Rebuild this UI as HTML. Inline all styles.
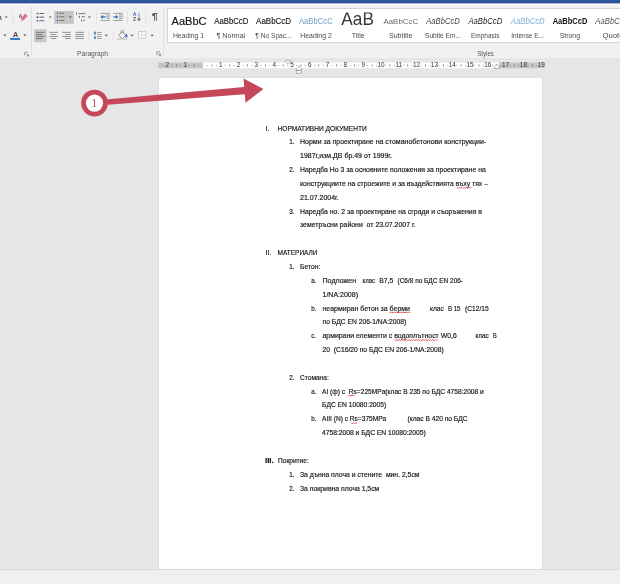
<!DOCTYPE html>
<html lang="bg"><head><meta charset="utf-8"><title>Document</title>
<style>
html,body{margin:0;padding:0;}
body{width:620px;height:584px;overflow:hidden;background:#e6e6e6;font-family:"Liberation Sans",sans-serif;position:relative;}
#titlebar{position:absolute;left:0;top:0;width:620px;height:4px;background:#2b579a;}
#ribbon{position:absolute;left:0;top:4px;width:620px;height:54px;background:#f1f1f1;}
#gallery{position:absolute;left:167px;top:8px;width:460px;height:35px;background:#fff;border:1px solid #d4d4d4;box-sizing:border-box;}
#workspace{position:absolute;left:0;top:58px;width:620px;height:511px;background:#e6e6e6;}
#page{position:absolute;left:159px;top:78px;width:383px;height:491px;background:#fff;box-shadow:0 0 0 1px #dedede;}
#statusbar{position:absolute;left:0;top:569px;width:620px;height:15px;background:#f0f0f0;border-top:1px solid #dadada;box-sizing:border-box;}
#ov{position:absolute;left:0;top:0;will-change:transform;}
text{font-family:"Liberation Sans",sans-serif;}
</style></head><body>
<div id="titlebar"></div>
<div id="ribbon"></div>
<div id="gallery"></div>
<div id="workspace"></div>
<div id="page"></div>
<div id="statusbar"></div>
<svg id="ov" width="620" height="584" viewBox="0 0 620 584">

<g id="doctext">
<text x="265.50" y="130.50" font-size="7.6" fill="#151515" textLength="3.80" lengthAdjust="spacingAndGlyphs" xml:space="preserve" stroke="#151515" stroke-width="0.18">I.</text>
<text x="277.50" y="130.50" font-size="7.6" fill="#151515" textLength="89.25" lengthAdjust="spacingAndGlyphs" xml:space="preserve" stroke="#151515" stroke-width="0.18">НОРМАТИВНИ ДОКУМЕНТИ</text>
<text x="289.25" y="144.35" font-size="7.6" fill="#151515" textLength="5.25" lengthAdjust="spacingAndGlyphs" xml:space="preserve" stroke="#151515" stroke-width="0.18">1.</text>
<text x="300.00" y="144.35" font-size="7.6" fill="#151515" textLength="186.25" lengthAdjust="spacingAndGlyphs" xml:space="preserve" stroke="#151515" stroke-width="0.18">Норми за проектиране на стоманобетонови конструкции-</text>
<text x="300.00" y="158.19" font-size="7.6" fill="#151515" textLength="92.00" lengthAdjust="spacingAndGlyphs" xml:space="preserve" stroke="#151515" stroke-width="0.18">1987г,изм.ДВ бр.49 от 1999г.</text>
<text x="289.25" y="172.04" font-size="7.6" fill="#151515" textLength="5.25" lengthAdjust="spacingAndGlyphs" xml:space="preserve" stroke="#151515" stroke-width="0.18">2.</text>
<text x="300.00" y="172.04" font-size="7.6" fill="#151515" textLength="185.75" lengthAdjust="spacingAndGlyphs" xml:space="preserve" stroke="#151515" stroke-width="0.18">Наредба Но 3 за основните положения за проектиране на</text>
<text x="300.00" y="185.88" font-size="7.6" fill="#151515" textLength="188.00" lengthAdjust="spacingAndGlyphs" xml:space="preserve" stroke="#151515" stroke-width="0.18">конструкциите на строежите и за въздействията въху тях –</text>
<text x="300.00" y="199.73" font-size="7.6" fill="#151515" textLength="38.75" lengthAdjust="spacingAndGlyphs" xml:space="preserve" stroke="#151515" stroke-width="0.18">21.07.2004г.</text>
<text x="289.25" y="213.58" font-size="7.6" fill="#151515" textLength="5.25" lengthAdjust="spacingAndGlyphs" xml:space="preserve" stroke="#151515" stroke-width="0.18">3.</text>
<text x="300.00" y="213.58" font-size="7.6" fill="#151515" textLength="182.00" lengthAdjust="spacingAndGlyphs" xml:space="preserve" stroke="#151515" stroke-width="0.18">Наредба но. 2 за проектиране на сгради и съоръжения в</text>
<text x="300.00" y="227.42" font-size="7.6" fill="#151515" textLength="115.50" lengthAdjust="spacingAndGlyphs" xml:space="preserve" stroke="#151515" stroke-width="0.18">земетръсни райони  от 23.07.2007 г.</text>
<text x="265.50" y="255.11" font-size="7.6" fill="#151515" textLength="6.00" lengthAdjust="spacingAndGlyphs" xml:space="preserve" stroke="#151515" stroke-width="0.18">II.</text>
<text x="277.50" y="255.11" font-size="7.6" fill="#151515" textLength="40.00" lengthAdjust="spacingAndGlyphs" xml:space="preserve" stroke="#151515" stroke-width="0.18">МАТЕРИАЛИ</text>
<text x="289.25" y="268.96" font-size="7.6" fill="#151515" textLength="5.25" lengthAdjust="spacingAndGlyphs" xml:space="preserve" stroke="#151515" stroke-width="0.18">1.</text>
<text x="300.00" y="268.96" font-size="7.6" fill="#151515" textLength="20.50" lengthAdjust="spacingAndGlyphs" xml:space="preserve" stroke="#151515" stroke-width="0.18">Бетон:</text>
<text x="311.25" y="282.81" font-size="7.6" fill="#151515" textLength="5.05" lengthAdjust="spacingAndGlyphs" xml:space="preserve" stroke="#151515" stroke-width="0.18">a.</text>
<text x="322.50" y="282.81" font-size="7.6" fill="#151515" textLength="33.75" lengthAdjust="spacingAndGlyphs" xml:space="preserve" stroke="#151515" stroke-width="0.18">Подложен</text>
<text x="362.50" y="282.81" font-size="7.6" fill="#151515" textLength="12.50" lengthAdjust="spacingAndGlyphs" xml:space="preserve" stroke="#151515" stroke-width="0.18">клас</text>
<text x="379.25" y="282.81" font-size="7.6" fill="#151515" textLength="14.00" lengthAdjust="spacingAndGlyphs" xml:space="preserve" stroke="#151515" stroke-width="0.18">В7,5</text>
<text x="397.50" y="282.81" font-size="7.6" fill="#151515" textLength="65.50" lengthAdjust="spacingAndGlyphs" xml:space="preserve" stroke="#151515" stroke-width="0.18">(С6/8 по БДС EN 206-</text>
<text x="322.50" y="296.65" font-size="7.6" fill="#151515" textLength="35.50" lengthAdjust="spacingAndGlyphs" xml:space="preserve" stroke="#151515" stroke-width="0.18">1/NA:2008)</text>
<text x="311.25" y="310.50" font-size="7.6" fill="#151515" textLength="5.25" lengthAdjust="spacingAndGlyphs" xml:space="preserve" stroke="#151515" stroke-width="0.18">b.</text>
<text x="322.50" y="310.50" font-size="7.6" fill="#151515" textLength="87.50" lengthAdjust="spacingAndGlyphs" xml:space="preserve" stroke="#151515" stroke-width="0.18">неармиран бетон за берми</text>
<text x="430.00" y="310.50" font-size="7.6" fill="#151515" textLength="13.75" lengthAdjust="spacingAndGlyphs" xml:space="preserve" stroke="#151515" stroke-width="0.18">клас</text>
<text x="448.00" y="310.50" font-size="7.6" fill="#151515" textLength="12.50" lengthAdjust="spacingAndGlyphs" xml:space="preserve" stroke="#151515" stroke-width="0.18">В 15</text>
<text x="465.00" y="310.50" font-size="7.6" fill="#151515" textLength="23.75" lengthAdjust="spacingAndGlyphs" xml:space="preserve" stroke="#151515" stroke-width="0.18">(С12/15</text>
<text x="322.50" y="324.34" font-size="7.6" fill="#151515" textLength="83.75" lengthAdjust="spacingAndGlyphs" xml:space="preserve" stroke="#151515" stroke-width="0.18">по БДС EN 206-1/NA:2008)</text>
<text x="311.25" y="338.19" font-size="7.6" fill="#151515" textLength="4.75" lengthAdjust="spacingAndGlyphs" xml:space="preserve" stroke="#151515" stroke-width="0.18">c.</text>
<text x="322.50" y="338.19" font-size="7.6" fill="#151515" textLength="134.25" lengthAdjust="spacingAndGlyphs" xml:space="preserve" stroke="#151515" stroke-width="0.18">армирани елементи с водоплътност W0,6</text>
<text x="475.50" y="338.19" font-size="7.6" fill="#151515" textLength="13.25" lengthAdjust="spacingAndGlyphs" xml:space="preserve" stroke="#151515" stroke-width="0.18">клас</text>
<text x="493.00" y="338.19" font-size="7.6" fill="#151515" textLength="3.75" lengthAdjust="spacingAndGlyphs" xml:space="preserve" stroke="#151515" stroke-width="0.18">В</text>
<text x="322.50" y="352.04" font-size="7.6" fill="#151515" textLength="121.25" lengthAdjust="spacingAndGlyphs" xml:space="preserve" stroke="#151515" stroke-width="0.18">20  (С16/20 по БДС EN 206-1/NA:2008)</text>
<text x="289.25" y="379.73" font-size="7.6" fill="#151515" textLength="5.25" lengthAdjust="spacingAndGlyphs" xml:space="preserve" stroke="#151515" stroke-width="0.18">2.</text>
<text x="300.00" y="379.73" font-size="7.6" fill="#151515" textLength="28.75" lengthAdjust="spacingAndGlyphs" xml:space="preserve" stroke="#151515" stroke-width="0.18">Стомана:</text>
<text x="311.25" y="393.57" font-size="7.6" fill="#151515" textLength="5.05" lengthAdjust="spacingAndGlyphs" xml:space="preserve" stroke="#151515" stroke-width="0.18">a.</text>
<text x="322.00" y="393.57" font-size="7.6" fill="#151515" textLength="161.75" lengthAdjust="spacingAndGlyphs" xml:space="preserve" stroke="#151515" stroke-width="0.18">AI (ф) с  Rs=225MPa(клас В 235 по БДС 4758:2008 и</text>
<text x="322.00" y="407.42" font-size="7.6" fill="#151515" textLength="64.25" lengthAdjust="spacingAndGlyphs" xml:space="preserve" stroke="#151515" stroke-width="0.18">БДС EN 10080:2005)</text>
<text x="311.25" y="421.27" font-size="7.6" fill="#151515" textLength="5.25" lengthAdjust="spacingAndGlyphs" xml:space="preserve" stroke="#151515" stroke-width="0.18">b.</text>
<text x="322.00" y="421.27" font-size="7.6" fill="#151515" textLength="64.25" lengthAdjust="spacingAndGlyphs" xml:space="preserve" stroke="#151515" stroke-width="0.18">AIII (N) с Rs=375MPa</text>
<text x="407.50" y="421.27" font-size="7.6" fill="#151515" textLength="60.00" lengthAdjust="spacingAndGlyphs" xml:space="preserve" stroke="#151515" stroke-width="0.18">(клас В 420 по БДС</text>
<text x="322.00" y="435.11" font-size="7.6" fill="#151515" textLength="103.75" lengthAdjust="spacingAndGlyphs" xml:space="preserve" stroke="#151515" stroke-width="0.18">4758:2008 и БДС EN 10080:2005)</text>
<text x="265.00" y="462.80" font-size="7.6" fill="#151515" textLength="8.75" lengthAdjust="spacingAndGlyphs" xml:space="preserve" font-weight="bold" stroke="#151515" stroke-width="0.18">III.</text>
<text x="278.00" y="462.80" font-size="7.6" fill="#151515" textLength="30.75" lengthAdjust="spacingAndGlyphs" xml:space="preserve" stroke="#151515" stroke-width="0.18">Покритие:</text>
<text x="289.25" y="476.65" font-size="7.6" fill="#151515" textLength="5.25" lengthAdjust="spacingAndGlyphs" xml:space="preserve" stroke="#151515" stroke-width="0.18">1.</text>
<text x="300.00" y="476.65" font-size="7.6" fill="#151515" textLength="119.50" lengthAdjust="spacingAndGlyphs" xml:space="preserve" stroke="#151515" stroke-width="0.18">За дънна плоча и стените  мин. 2,5см</text>
<text x="289.25" y="490.50" font-size="7.6" fill="#151515" textLength="5.25" lengthAdjust="spacingAndGlyphs" xml:space="preserve" stroke="#151515" stroke-width="0.18">2.</text>
<text x="300.00" y="490.50" font-size="7.6" fill="#151515" textLength="79.25" lengthAdjust="spacingAndGlyphs" xml:space="preserve" stroke="#151515" stroke-width="0.18">За покривна плоча 1,5см</text>
<polyline points="457.0,187.2 458.2,188.4 459.4,187.2 460.6,188.4 461.8,187.2 463.0,188.4 464.2,187.2 465.4,188.4 466.6,187.2 467.8,188.4 469.0,187.2 470.2,188.4 471.4,187.2" fill="none" stroke="#e02a2a" stroke-width="0.8"/>
<polyline points="389.5,311.8 390.7,313.0 391.9,311.8 393.1,313.0 394.3,311.8 395.5,313.0 396.7,311.8 397.9,313.0 399.1,311.8 400.3,313.0 401.5,311.8 402.7,313.0 403.9,311.8 405.1,313.0 406.3,311.8 407.5,313.0 408.7,311.8 409.9,313.0" fill="none" stroke="#e02a2a" stroke-width="0.8"/>
<polyline points="394.5,339.5 395.7,340.7 396.9,339.5 398.1,340.7 399.3,339.5 400.5,340.7 401.7,339.5 402.9,340.7 404.1,339.5 405.3,340.7 406.5,339.5 407.7,340.7 408.9,339.5 410.1,340.7 411.3,339.5 412.5,340.7 413.7,339.5 414.9,340.7 416.1,339.5 417.3,340.7 418.5,339.5 419.7,340.7 420.9,339.5 422.1,340.7 423.3,339.5 424.5,340.7 425.7,339.5 426.9,340.7 428.1,339.5 429.3,340.7 430.5,339.5 431.7,340.7 432.9,339.5 434.1,340.7 435.3,339.5 436.5,340.7 437.7,339.5" fill="none" stroke="#e02a2a" stroke-width="0.8"/>
<polyline points="348.5,394.9 349.7,396.1 350.9,394.9 352.1,396.1 353.3,394.9 354.5,396.1" fill="none" stroke="#e02a2a" stroke-width="0.8"/>
<polyline points="351.0,422.6 352.2,423.8 353.4,422.6 354.6,423.8 355.8,422.6 357.0,423.8" fill="none" stroke="#e02a2a" stroke-width="0.8"/>
</g>
<g id="ruler">
<rect x="158" y="62.5" width="45" height="5.7" fill="#c6c6c6"/>
<rect x="203" y="62.5" width="296" height="5.7" fill="#ffffff"/>
<rect x="499" y="62.5" width="45.5" height="5.7" fill="#c6c6c6"/>
<text x="167.4" y="67.4" font-size="6.4" fill="#333" text-anchor="middle">2</text>
<text x="185.2" y="67.4" font-size="6.4" fill="#333" text-anchor="middle">1</text>
<text x="220.8" y="67.4" font-size="6.4" fill="#333" text-anchor="middle">1</text>
<text x="238.6" y="67.4" font-size="6.4" fill="#333" text-anchor="middle">2</text>
<text x="256.4" y="67.4" font-size="6.4" fill="#333" text-anchor="middle">3</text>
<text x="274.2" y="67.4" font-size="6.4" fill="#333" text-anchor="middle">4</text>
<text x="292.0" y="67.4" font-size="6.4" fill="#333" text-anchor="middle">5</text>
<text x="309.8" y="67.4" font-size="6.4" fill="#333" text-anchor="middle">6</text>
<text x="327.6" y="67.4" font-size="6.4" fill="#333" text-anchor="middle">7</text>
<text x="345.4" y="67.4" font-size="6.4" fill="#333" text-anchor="middle">8</text>
<text x="363.2" y="67.4" font-size="6.4" fill="#333" text-anchor="middle">9</text>
<text x="381.0" y="67.4" font-size="6.4" fill="#333" text-anchor="middle">10</text>
<text x="398.8" y="67.4" font-size="6.4" fill="#333" text-anchor="middle">11</text>
<text x="416.6" y="67.4" font-size="6.4" fill="#333" text-anchor="middle">12</text>
<text x="434.4" y="67.4" font-size="6.4" fill="#333" text-anchor="middle">13</text>
<text x="452.2" y="67.4" font-size="6.4" fill="#333" text-anchor="middle">14</text>
<text x="470.0" y="67.4" font-size="6.4" fill="#333" text-anchor="middle">15</text>
<text x="487.8" y="67.4" font-size="6.4" fill="#333" text-anchor="middle">16</text>
<text x="505.6" y="67.4" font-size="6.4" fill="#333" text-anchor="middle">17</text>
<text x="523.4" y="67.4" font-size="6.4" fill="#333" text-anchor="middle">18</text>
<text x="541.2" y="67.4" font-size="6.4" fill="#333" text-anchor="middle">19</text>
<rect x="162.5" y="65" width="0.8" height="0.8" fill="#777"/>
<rect x="171.4" y="65" width="0.8" height="0.8" fill="#777"/>
<rect x="176.0" y="64.3" width="0.7" height="2.3" fill="#6a6a6a"/>
<rect x="180.3" y="65" width="0.8" height="0.8" fill="#777"/>
<rect x="189.2" y="65" width="0.8" height="0.8" fill="#777"/>
<rect x="193.8" y="64.3" width="0.7" height="2.3" fill="#6a6a6a"/>
<rect x="198.2" y="65" width="0.8" height="0.8" fill="#777"/>
<rect x="207.0" y="65" width="0.8" height="0.8" fill="#777"/>
<rect x="211.6" y="64.3" width="0.7" height="2.3" fill="#6a6a6a"/>
<rect x="215.9" y="65" width="0.8" height="0.8" fill="#777"/>
<rect x="224.8" y="65" width="0.8" height="0.8" fill="#777"/>
<rect x="229.4" y="64.3" width="0.7" height="2.3" fill="#6a6a6a"/>
<rect x="233.8" y="65" width="0.8" height="0.8" fill="#777"/>
<rect x="242.7" y="65" width="0.8" height="0.8" fill="#777"/>
<rect x="247.2" y="64.3" width="0.7" height="2.3" fill="#6a6a6a"/>
<rect x="251.5" y="65" width="0.8" height="0.8" fill="#777"/>
<rect x="260.5" y="65" width="0.8" height="0.8" fill="#777"/>
<rect x="265.0" y="64.3" width="0.7" height="2.3" fill="#6a6a6a"/>
<rect x="269.4" y="65" width="0.8" height="0.8" fill="#777"/>
<rect x="278.2" y="65" width="0.8" height="0.8" fill="#777"/>
<rect x="282.8" y="64.3" width="0.7" height="2.3" fill="#6a6a6a"/>
<rect x="287.2" y="65" width="0.8" height="0.8" fill="#777"/>
<rect x="296.1" y="65" width="0.8" height="0.8" fill="#777"/>
<rect x="300.6" y="64.3" width="0.7" height="2.3" fill="#6a6a6a"/>
<rect x="305.0" y="65" width="0.8" height="0.8" fill="#777"/>
<rect x="313.9" y="65" width="0.8" height="0.8" fill="#777"/>
<rect x="318.4" y="64.3" width="0.7" height="2.3" fill="#6a6a6a"/>
<rect x="322.8" y="65" width="0.8" height="0.8" fill="#777"/>
<rect x="331.7" y="65" width="0.8" height="0.8" fill="#777"/>
<rect x="336.2" y="64.3" width="0.7" height="2.3" fill="#6a6a6a"/>
<rect x="340.6" y="65" width="0.8" height="0.8" fill="#777"/>
<rect x="349.5" y="65" width="0.8" height="0.8" fill="#777"/>
<rect x="354.0" y="64.3" width="0.7" height="2.3" fill="#6a6a6a"/>
<rect x="358.4" y="65" width="0.8" height="0.8" fill="#777"/>
<rect x="367.2" y="65" width="0.8" height="0.8" fill="#777"/>
<rect x="371.8" y="64.3" width="0.7" height="2.3" fill="#6a6a6a"/>
<rect x="376.2" y="65" width="0.8" height="0.8" fill="#777"/>
<rect x="385.1" y="65" width="0.8" height="0.8" fill="#777"/>
<rect x="389.6" y="64.3" width="0.7" height="2.3" fill="#6a6a6a"/>
<rect x="394.0" y="65" width="0.8" height="0.8" fill="#777"/>
<rect x="402.9" y="65" width="0.8" height="0.8" fill="#777"/>
<rect x="407.4" y="64.3" width="0.7" height="2.3" fill="#6a6a6a"/>
<rect x="411.8" y="65" width="0.8" height="0.8" fill="#777"/>
<rect x="420.7" y="65" width="0.8" height="0.8" fill="#777"/>
<rect x="425.2" y="64.3" width="0.7" height="2.3" fill="#6a6a6a"/>
<rect x="429.6" y="65" width="0.8" height="0.8" fill="#777"/>
<rect x="438.5" y="65" width="0.8" height="0.8" fill="#777"/>
<rect x="443.0" y="64.3" width="0.7" height="2.3" fill="#6a6a6a"/>
<rect x="447.4" y="65" width="0.8" height="0.8" fill="#777"/>
<rect x="456.2" y="65" width="0.8" height="0.8" fill="#777"/>
<rect x="460.8" y="64.3" width="0.7" height="2.3" fill="#6a6a6a"/>
<rect x="465.2" y="65" width="0.8" height="0.8" fill="#777"/>
<rect x="474.1" y="65" width="0.8" height="0.8" fill="#777"/>
<rect x="478.6" y="64.3" width="0.7" height="2.3" fill="#6a6a6a"/>
<rect x="483.0" y="65" width="0.8" height="0.8" fill="#777"/>
<rect x="491.9" y="65" width="0.8" height="0.8" fill="#777"/>
<rect x="496.4" y="64.3" width="0.7" height="2.3" fill="#6a6a6a"/>
<rect x="500.8" y="65" width="0.8" height="0.8" fill="#777"/>
<rect x="509.7" y="65" width="0.8" height="0.8" fill="#777"/>
<rect x="514.2" y="64.3" width="0.7" height="2.3" fill="#6a6a6a"/>
<rect x="518.6" y="65" width="0.8" height="0.8" fill="#777"/>
<rect x="527.5" y="65" width="0.8" height="0.8" fill="#777"/>
<rect x="532.0" y="64.3" width="0.7" height="2.3" fill="#6a6a6a"/>
<rect x="536.4" y="65" width="0.8" height="0.8" fill="#777"/>
<path d="M285.5 60.4 h5 v1.1 l-2.5 2.7 l-2.5 -2.7 z" fill="#fafafa" stroke="#888" stroke-width="0.6"/>
<path d="M296.2 70.2 v-1.6 l2.7 -2.8 l2.7 2.8 v1.6 z" fill="#fafafa" stroke="#888" stroke-width="0.6"/>
<rect x="296.2" y="70.6" width="5.4" height="2.6" fill="#fafafa" stroke="#888" stroke-width="0.6"/>
<path d="M494.2 68.6 v-1.4 l2.7 -2.8 l2.7 2.8 v1.4 z" fill="#fafafa" stroke="#888" stroke-width="0.6"/>
</g>
<g id="callout">
<polygon points="94.7,105.8 244.8,94.3 245.5,102.7 263.4,89.0 243.5,78.4 244.2,86.9 94.3,100.4" fill="#c5485a"/>
<circle cx="94.5" cy="103.1" r="13.4" fill="#c5485a"/>
<circle cx="94.5" cy="103.1" r="8.6" fill="#ffffff"/>
<text x="94.3" y="107" font-size="11.5" fill="#c5485a" text-anchor="middle" style="font-family:'Liberation Serif',serif">1</text>
</g>
<g id="gallerytext">
<text x="171.60" y="24.50" font-size="11.5" fill="#111" textLength="34.90" lengthAdjust="spacingAndGlyphs" xml:space="preserve" stroke="#111" stroke-width="0.15">AaBbC</text>
<text x="172.90" y="38.00" font-size="7.6" fill="#4a4a4a" textLength="31.20" lengthAdjust="spacingAndGlyphs" xml:space="preserve">Heading 1</text>
<text x="214.20" y="23.70" font-size="8.2" fill="#111" textLength="34.20" lengthAdjust="spacingAndGlyphs" xml:space="preserve" stroke="#111" stroke-width="0.1">AaBbCcD</text>
<text x="216.60" y="37.90" font-size="7.6" fill="#4a4a4a" textLength="28.60" lengthAdjust="spacingAndGlyphs" xml:space="preserve">¶ Normal</text>
<text x="256.10" y="23.70" font-size="8.2" fill="#111" textLength="35.00" lengthAdjust="spacingAndGlyphs" xml:space="preserve" stroke="#111" stroke-width="0.1">AaBbCcD</text>
<text x="255.30" y="37.90" font-size="7.6" fill="#4a4a4a" textLength="36.30" lengthAdjust="spacingAndGlyphs" xml:space="preserve">¶ No Spac...</text>
<text x="298.90" y="23.70" font-size="8.6" fill="#6d9cc8" textLength="33.80" lengthAdjust="spacingAndGlyphs" xml:space="preserve">AaBbCcC</text>
<text x="300.20" y="37.90" font-size="7.6" fill="#4a4a4a" textLength="31.70" lengthAdjust="spacingAndGlyphs" xml:space="preserve">Heading 2</text>
<clipPath id="ttl"><rect x="335" y="12.6" width="45" height="20"/></clipPath>
<g clip-path="url(#ttl)">
<text x="341.30" y="25.00" font-size="19" fill="#383838" textLength="32.60" lengthAdjust="spacingAndGlyphs" xml:space="preserve">AaB</text>
</g>
<text x="351.80" y="37.90" font-size="7.6" fill="#4a4a4a" textLength="12.90" lengthAdjust="spacingAndGlyphs" xml:space="preserve">Title</text>
<text x="383.4" y="23.7" font-size="7.8" fill="#666" textLength="34.8" lengthAdjust="spacing">AaBbCcC</text>
<text x="389.00" y="37.90" font-size="7.6" fill="#4a4a4a" textLength="23.40" lengthAdjust="spacingAndGlyphs" xml:space="preserve">Subtitle</text>
<text x="426.30" y="23.70" font-size="8.2" fill="#444" textLength="33.40" lengthAdjust="spacingAndGlyphs" xml:space="preserve" font-style="italic">AaBbCcD</text>
<text x="425.00" y="37.90" font-size="7.6" fill="#4a4a4a" textLength="36.00" lengthAdjust="spacingAndGlyphs" xml:space="preserve">Subtle Em...</text>
<text x="468.40" y="23.70" font-size="8.2" fill="#1a1a1a" textLength="33.90" lengthAdjust="spacingAndGlyphs" xml:space="preserve" font-style="italic">AaBbCcD</text>
<text x="471.00" y="37.90" font-size="7.6" fill="#4a4a4a" textLength="28.50" lengthAdjust="spacingAndGlyphs" xml:space="preserve">Emphasis</text>
<text x="510.80" y="23.70" font-size="8.2" fill="#7fb0d6" textLength="33.90" lengthAdjust="spacingAndGlyphs" xml:space="preserve" font-style="italic">AaBbCcD</text>
<text x="511.30" y="37.90" font-size="7.6" fill="#4a4a4a" textLength="32.60" lengthAdjust="spacingAndGlyphs" xml:space="preserve">Intense E...</text>
<text x="552.70" y="23.70" font-size="8.2" fill="#111" textLength="34.70" lengthAdjust="spacingAndGlyphs" xml:space="preserve" font-weight="bold">AaBbCcD</text>
<text x="559.80" y="37.90" font-size="7.6" fill="#4a4a4a" textLength="20.20" lengthAdjust="spacingAndGlyphs" xml:space="preserve">Strong</text>
<text x="595.30" y="23.70" font-size="8.2" fill="#555" textLength="34.00" lengthAdjust="spacingAndGlyphs" xml:space="preserve" font-style="italic">AaBbCcD</text>
<text x="602.60" y="37.90" font-size="7.6" fill="#4a4a4a" textLength="20.90" lengthAdjust="spacingAndGlyphs" xml:space="preserve">Quote</text>
<text x="77.10" y="55.70" font-size="7.6" fill="#555" textLength="30.90" lengthAdjust="spacingAndGlyphs" xml:space="preserve">Paragraph</text>
<text x="477.30" y="55.60" font-size="7.6" fill="#555" textLength="16.60" lengthAdjust="spacingAndGlyphs" xml:space="preserve">Styles</text>
</g>
<g id="icons">
<rect x="0" y="3.4" width="620" height="2.2" fill="#f9f9f9"/>
<rect x="31.1" y="6" width="0.9" height="50" fill="#dedede"/>
<rect x="163.0" y="6" width="0.9" height="50" fill="#dedede"/>
<rect x="12.5" y="12" width="0.9" height="12" fill="#e0e0e0"/>
<rect x="96.1" y="12" width="0.9" height="12" fill="#e0e0e0"/>
<rect x="127.0" y="12" width="0.9" height="12" fill="#e0e0e0"/>
<rect x="145.4" y="12" width="0.9" height="12" fill="#e0e0e0"/>
<rect x="88.3" y="30" width="0.9" height="12" fill="#e0e0e0"/>
<rect x="112.8" y="30" width="0.9" height="12" fill="#e0e0e0"/>
<text x="-2.6" y="19.6" font-size="8" fill="#444">a</text>
<path d="M4.7 16.4 h3 l-1.5 1.7 z" fill="#4a4a4a"/>
<text x="18.7" y="17.6" font-size="6.2" fill="#4a4a4a" font-weight="bold" textLength="3.4" lengthAdjust="spacingAndGlyphs">A</text>
<g transform="rotate(-47 23.7 17.8)"><rect x="19.5" y="16.1" width="8.4" height="3.4" rx="0.6" fill="#e6708f"/><rect x="19.5" y="16.1" width="1.6" height="3.4" rx="0.5" fill="#f6d6de"/></g>
<path d="M3.4 34.6 h3 l-1.5 1.7 z" fill="#4a4a4a"/>
<text x="12.9" y="37.4" font-size="7.6" fill="#454545" font-weight="bold" textLength="5.2" lengthAdjust="spacingAndGlyphs">A</text>
<rect x="10.2" y="37.9" width="9.9" height="2.1" fill="#3b78c3"/>
<path d="M23.4 34.6 h3 l-1.5 1.7 z" fill="#4a4a4a"/>
<path d="M24.6 55.400000000000006 V52.2 H27.8" fill="none" stroke="#777" stroke-width="0.7"/>
<path d="M26.200000000000003 53.800000000000004 L28.200000000000003 55.800000000000004 M28.400000000000002 54.0 V56.0 H26.400000000000002" fill="none" stroke="#777" stroke-width="0.7"/>
<path d="M156.8 55.0 V51.8 H160.0" fill="none" stroke="#777" stroke-width="0.7"/>
<path d="M158.4 53.4 L160.4 55.4 M160.60000000000002 53.599999999999994 V55.599999999999994 H158.60000000000002" fill="none" stroke="#777" stroke-width="0.7"/>
<rect x="36.7" y="12.7" width="1.6" height="1.6" rx="0.5" fill="#2f5597"/>
<rect x="39.4" y="13.05" width="4.8" height="0.9" fill="#5a5a5a"/>
<rect x="36.7" y="16.3" width="1.6" height="1.6" rx="0.5" fill="#2f5597"/>
<rect x="39.4" y="16.65" width="4.8" height="0.9" fill="#5a5a5a"/>
<rect x="36.7" y="19.9" width="1.6" height="1.6" rx="0.5" fill="#2f5597"/>
<rect x="39.4" y="20.25" width="4.8" height="0.9" fill="#5a5a5a"/>
<path d="M48.8 16.4 h3 l-1.5 1.7 z" fill="#4a4a4a"/>
<rect x="54.2" y="11" width="19.6" height="12.9" fill="#c6c6c6"/>
<rect x="56.9" y="12.1" width="0.9" height="2.2" fill="#3a6db5"/>
<rect x="59.2" y="12.75" width="5.2" height="0.9" fill="#6b6b5c"/>
<rect x="56.9" y="15.700000000000001" width="0.9" height="2.2" fill="#3a6db5"/>
<rect x="59.2" y="16.35" width="5.2" height="0.9" fill="#6b6b5c"/>
<rect x="56.9" y="19.299999999999997" width="0.9" height="2.2" fill="#3a6db5"/>
<rect x="59.2" y="19.95" width="5.2" height="0.9" fill="#6b6b5c"/>
<path d="M68.8 16.4 h3 l-1.5 1.7 z" fill="#4a4a4a"/>
<rect x="76" y="12.4" width="0.9" height="2.2" fill="#3a6db5"/>
<rect x="78.5" y="13.15" width="6.8" height="0.9" fill="#6e6e6e"/>
<rect x="78.8" y="15.7" width="1.1" height="2" fill="#3a6db5"/>
<rect x="81.4" y="16.35" width="3.5" height="0.9" fill="#6e6e6e"/>
<rect x="81" y="19.3" width="0.8" height="2.2" fill="#3a6db5"/>
<rect x="83.0" y="19.95" width="1.9" height="0.9" fill="#6e6e6e"/>
<path d="M87.9 16.4 h3 l-1.5 1.7 z" fill="#4a4a4a"/>
<rect x="100.4" y="12.90" width="9.5" height="0.8" fill="#8c8c8c"/>
<rect x="100.4" y="20.10" width="9.5" height="0.8" fill="#8c8c8c"/>
<rect x="106.3" y="14.60" width="3.6" height="0.8" fill="#8c8c8c"/>
<rect x="106.3" y="16.40" width="3.6" height="0.8" fill="#8c8c8c"/>
<rect x="106.3" y="18.10" width="3.6" height="0.8" fill="#8c8c8c"/>
<path d="M100.4 16.9 l2.3 -2.1 v1.4 h2.9 v1.4 h-2.9 v1.4 z" fill="#3a6db5"/>
<rect x="113.3" y="12.90" width="9.5" height="0.8" fill="#8c8c8c"/>
<rect x="113.3" y="20.10" width="9.5" height="0.8" fill="#8c8c8c"/>
<rect x="118.9" y="14.60" width="3.9" height="0.8" fill="#8c8c8c"/>
<rect x="118.9" y="16.40" width="3.9" height="0.8" fill="#8c8c8c"/>
<rect x="118.9" y="18.10" width="3.9" height="0.8" fill="#8c8c8c"/>
<path d="M118.3 16.9 l-2.3 -2.1 v1.4 h-2.6 v1.4 h2.6 v1.4 z" fill="#3a6db5"/>
<text x="132.7" y="16.4" font-size="5.2" fill="#3a6db5" font-weight="bold">A</text>
<text x="132.9" y="21.3" font-size="5.2" fill="#4a5a78" font-weight="bold">Z</text>
<path d="M139 12.8 v6.6 M137.7 18.8 l1.3 2.3 l1.3 -2.3 z" fill="#777" stroke="#777" stroke-width="0.8"/>
<text x="151.8" y="19.2" font-size="8.2" fill="#505050" font-weight="bold" textLength="6" lengthAdjust="spacingAndGlyphs">¶</text>
<rect x="34.1" y="29.3" width="12.5" height="13" fill="#c8c8c8"/>
<rect x="36.0" y="31.85" width="8.6" height="0.9" fill="#707070"/>
<rect x="36.0" y="33.95" width="6.2" height="0.9" fill="#707070"/>
<rect x="36.0" y="35.95" width="8.6" height="0.9" fill="#707070"/>
<rect x="36.0" y="38.05" width="6.2" height="0.9" fill="#707070"/>
<rect x="49.4" y="31.85" width="8.6" height="0.9" fill="#888888"/>
<rect x="50.9" y="33.95" width="5.4" height="0.9" fill="#888888"/>
<rect x="49.4" y="35.95" width="8.6" height="0.9" fill="#888888"/>
<rect x="50.9" y="38.05" width="5.4" height="0.9" fill="#888888"/>
<rect x="62.2" y="31.85" width="8.5" height="0.9" fill="#888888"/>
<rect x="65.2" y="33.95" width="5.5" height="0.9" fill="#888888"/>
<rect x="62.2" y="35.95" width="8.5" height="0.9" fill="#888888"/>
<rect x="65.2" y="38.05" width="5.5" height="0.9" fill="#888888"/>
<rect x="75.4" y="31.85" width="8.4" height="0.9" fill="#888888"/>
<rect x="75.4" y="33.95" width="8.4" height="0.9" fill="#888888"/>
<rect x="75.4" y="35.95" width="8.4" height="0.9" fill="#888888"/>
<rect x="75.4" y="38.05" width="8.4" height="0.9" fill="#888888"/>
<path d="M95 32.4 v5.8" stroke="#4a76b8" stroke-width="0.7" fill="none"/>
<path d="M93.4 33.4 l1.6 -2.3 l1.6 2.3 z M93.4 37.2 l1.6 2.3 l1.6 -2.3 z" fill="#4a76b8"/>
<rect x="97.2" y="32.10" width="4.6" height="0.8" fill="#8c8c8c"/>
<rect x="97.2" y="34.10" width="4.6" height="0.8" fill="#8c8c8c"/>
<rect x="97.2" y="36.00" width="4.6" height="0.8" fill="#8c8c8c"/>
<rect x="97.2" y="38.00" width="4.6" height="0.8" fill="#8c8c8c"/>
<path d="M104.7 34.7 h3 l-1.5 1.7 z" fill="#4a4a4a"/>
<path d="M118.6 35.2 l3.6 -3.2 l3.6 3.4 l-3.4 3.2 z" fill="#fcfcfc" stroke="#6a6a6a" stroke-width="0.7"/>
<path d="M120.9 33.2 v-1.5 a1.3 1.3 0 0 1 2.6 0 v1.4" fill="none" stroke="#6a6a6a" stroke-width="0.6"/>
<path d="M126.4 33.4 c1.6 2.2 1.4 4 0 4.2 c-1.4 -0.2 -1.6 -2 0 -4.2z" fill="#3f66ad"/>
<rect x="117.8" y="38.3" width="9.2" height="1.5" fill="#e9e9e9" stroke="#b0b0b0" stroke-width="0.4"/>
<path d="M130.5 34.7 h3 l-1.5 1.7 z" fill="#4a4a4a"/>
<rect x="138.5" y="31.6" width="7" height="7" fill="#fafafa" stroke="#c2c2c2" stroke-width="0.7"/>
<path d="M142 31.6 v7 M138.5 35.1 h7" stroke="#cfcfcf" stroke-width="0.6" fill="none"/>
<path d="M150.6 34.7 h3 l-1.5 1.7 z" fill="#4a4a4a"/>
</g>
</svg>
</body></html>
